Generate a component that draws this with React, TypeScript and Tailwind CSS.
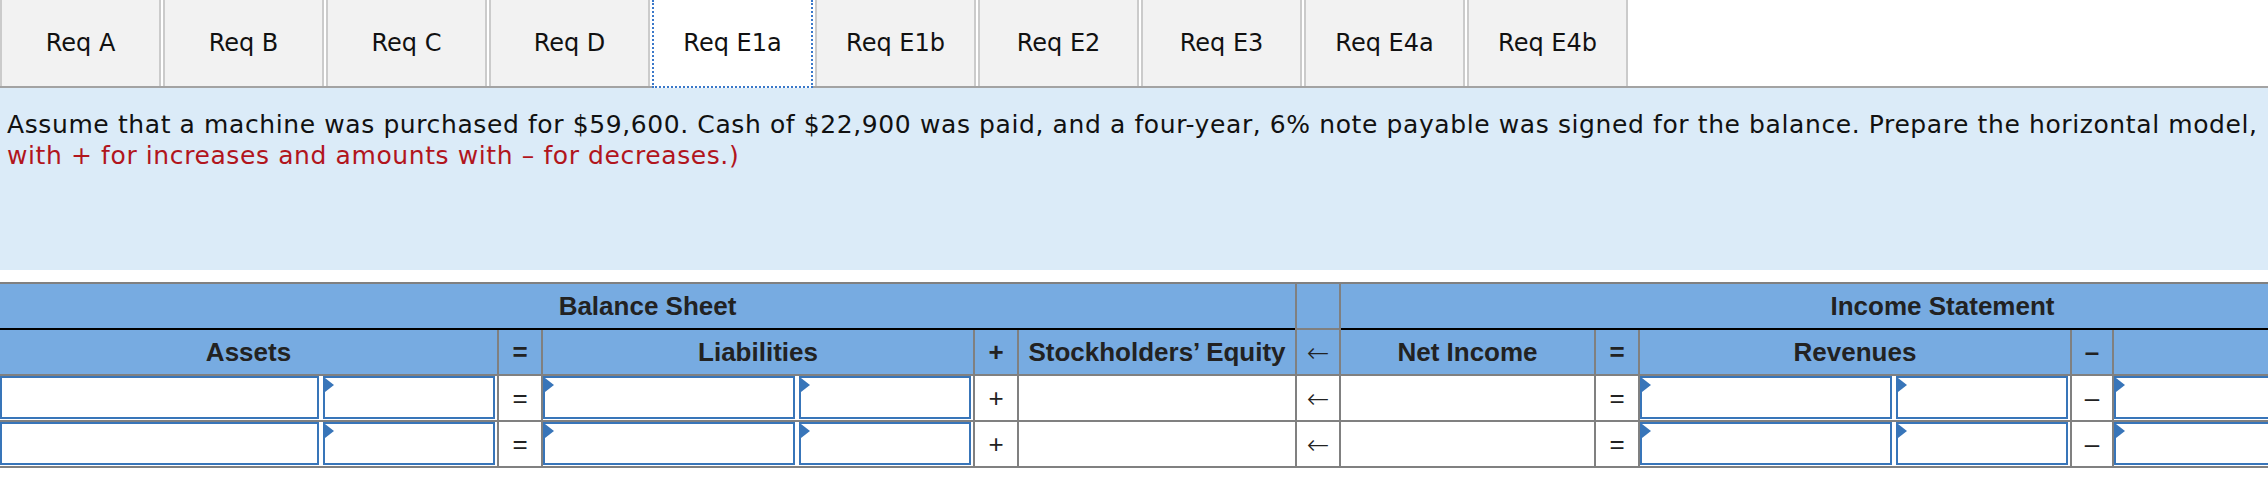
import clsx from "clsx";

const tabs = ["Req A", "Req B", "Req C", "Req D", "Req E1a", "Req E1b", "Req E2", "Req E3", "Req E4a", "Req E4b"];
const activeTab = "Req E1a";

// column template shared by header row 2 and the answer rows
const cols =
  "grid grid-cols-[497px_42px_430px_42px_276px_42px_253px_42px_430px_40px_430px] gap-x-[2px] bg-[#808080]";

function Flag() {
  return (
    <span className="absolute left-0 top-0 h-0 w-0 border-y-[7px] border-l-[9px] border-y-transparent border-l-[#3875b9]" />
  );
}

function Field({ flag = true, className }: { flag?: boolean; className?: string }) {
  return (
    <div className={clsx("relative h-[43px] border-2 border-[#3875b9] bg-white", className)}>
      {flag && <Flag />}
    </div>
  );
}

function TwoFields({ firstFlag = true }: { firstFlag?: boolean }) {
  return (
    <div className="flex h-[44px] gap-[4px] bg-white pr-[2px]">
      <Field flag={firstFlag} className="flex-1" />
      <Field className="w-[172px]" />
    </div>
  );
}

function Sym({ children }: { children: React.ReactNode }) {
  return (
    <div className="flex h-[44px] items-center justify-center bg-white text-[26px] text-[#222]">{children}</div>
  );
}

function Arrow({ head = false }: { head?: boolean }) {
  return (
    <div
      className={clsx(
        "flex h-[44px] items-center justify-center pt-[3px] font-['DejaVu_Sans',sans-serif] text-[27px] font-light text-[#222]",
        head ? "bg-[#77abe1]" : "bg-white"
      )}
    >
      ←
    </div>
  );
}

function HeadCell({ children }: { children?: React.ReactNode }) {
  return (
    <div className="flex h-[44px] items-center justify-center bg-[#77abe1] text-[26px] font-bold text-[#222]">
      {children}
    </div>
  );
}

function AnswerRow() {
  return (
    <div className={clsx(cols, "border-b-2 border-[#808080]")}>
      <TwoFields firstFlag={false} />
      <Sym>=</Sym>
      <TwoFields />
      <Sym>+</Sym>
      <div className="h-[44px] bg-white" />
      <Arrow />
      <div className="h-[44px] bg-white" />
      <Sym>=</Sym>
      <TwoFields />
      <Sym>–</Sym>
      <TwoFields />
    </div>
  );
}

export default function App() {
  return (
    <div className="h-[482px] w-[2268px] overflow-hidden bg-white">
      <div className="flex h-[88px] border-b-2 border-[#a3a3a3] font-['DejaVu_Sans',sans-serif] text-[24px] text-[#111]">
        {tabs.map((tab) =>
          tab === activeTab ? (
            <div
              key={tab}
              className="-mb-[2px] mr-[2px] flex w-[161px] items-center justify-center border-2 border-t-0 border-dotted border-[#3a78c9] bg-white"
            >
              {tab}
            </div>
          ) : (
            <div
              key={tab}
              className="mr-[2px] flex w-[161px] items-center justify-center border-x-2 border-[#cbcbcb] bg-[#f2f2f2]"
            >
              {tab}
            </div>
          )
        )}
      </div>

      <div className="h-[182px] bg-[#dbebf8] px-[7px] pt-[21px] font-['DejaVu_Sans',sans-serif] text-[25px] leading-[31px] tracking-[0.6px] whitespace-nowrap">
        <p className="text-[#111]">
          Assume that a machine was purchased for $59,600. Cash of $22,900 was paid, and a four-year, 6% note payable
          was signed for the balance. Prepare the horizontal model,
        </p>
        <p className="text-[#b1151d]">with + for increases and amounts with – for decreases.)</p>
      </div>

      <div className="mt-[12px] w-[2544px] border-t-2 border-[#808080] font-['Liberation_Sans','DejaVu_Sans',sans-serif]">
        <div className="grid grid-cols-[1295px_42px_1203px] gap-x-[2px] bg-[#808080]">
          <div className="flex h-[46px] items-center justify-center border-b-2 border-black bg-[#77abe1] text-[26px] font-bold text-[#222]">
            Balance Sheet
          </div>
          <div className="h-[46px] border-b-2 border-[#808080] bg-[#77abe1]" />
          <div className="flex h-[46px] items-center justify-center border-b-2 border-black bg-[#77abe1] text-[26px] font-bold text-[#222]">
            Income Statement
          </div>
        </div>

        <div className={clsx(cols, "border-b-2 border-[#808080]")}>
          <HeadCell>Assets</HeadCell>
          <HeadCell>=</HeadCell>
          <HeadCell>Liabilities</HeadCell>
          <HeadCell>+</HeadCell>
          <HeadCell>Stockholders’ Equity</HeadCell>
          <Arrow head />
          <HeadCell>Net Income</HeadCell>
          <HeadCell>=</HeadCell>
          <HeadCell>Revenues</HeadCell>
          <HeadCell>–</HeadCell>
          <HeadCell />
        </div>

        <AnswerRow />
        <AnswerRow />
      </div>
    </div>
  );
}
